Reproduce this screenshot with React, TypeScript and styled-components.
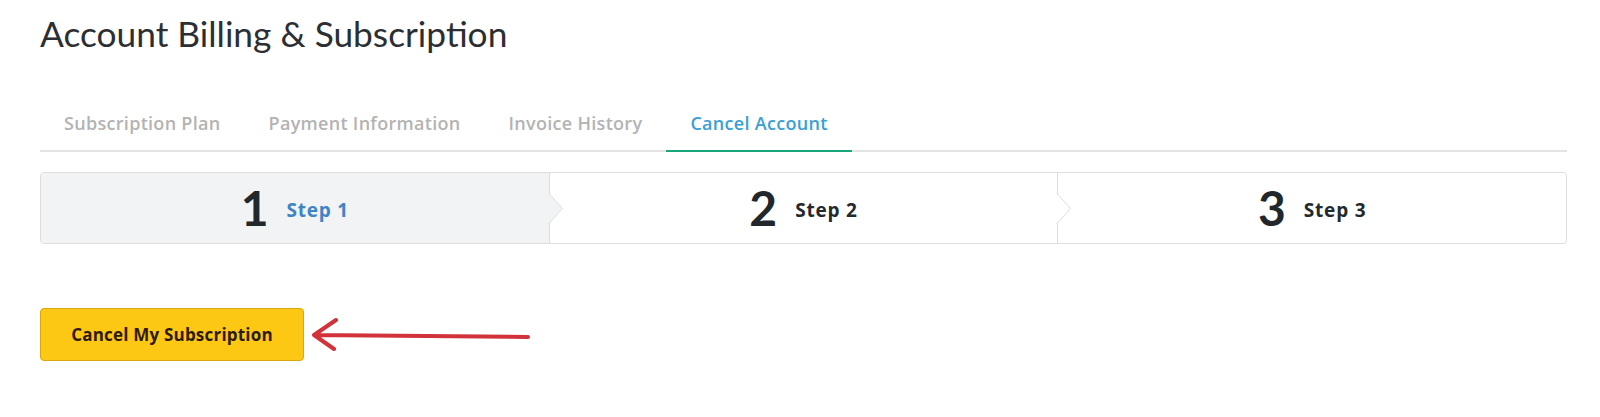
import React from 'react';
import styled, { createGlobalStyle } from 'styled-components';

const GlobalStyle = createGlobalStyle`
  body {
    margin: 0;
    background: #ffffff;
    font-family: "Open Sans", "Liberation Sans", sans-serif;
    color: #2b2f33;
  }
`;

const tabs = ['Subscription Plan', 'Payment Information', 'Invoice History', 'Cancel Account'];

const steps = [
  { num: '1', label: 'Step 1', active: true },
  { num: '2', label: 'Step 2', active: false },
  { num: '3', label: 'Step 3', active: false },
];

export default function App() {
  return (
    <>
      <GlobalStyle />
      <Page>
        <Title>Account Billing &amp; Subscription</Title>

        <TabBar>
          {tabs.map((t, i) => (
            <Tab key={t} active={i === tabs.length - 1}>
              {t}
            </Tab>
          ))}
        </TabBar>

        <Steps>
          {steps.map((s, i) => (
            <Step key={s.num} active={s.active} first={i === 0} last={i === steps.length - 1}>
              <StepNum>{s.num}</StepNum>
              <StepLabel active={s.active}>{s.label}</StepLabel>
              {i < steps.length - 1 && (
                <Chevron width="16" height="32" viewBox="0 0 16 32">
                  <polygon points="0,0 14.5,15.5 0,31" fill={s.active ? '#f2f3f5' : '#ffffff'} />
                  <polyline points="0.5,0 14.5,15.5 0.5,31" fill="none" stroke="#dcdde0" strokeWidth="1" />
                </Chevron>
              )}
            </Step>
          ))}
        </Steps>

        <ActionRow>
          <CancelButton>Cancel My Subscription</CancelButton>
          <svg width="222" height="38" viewBox="0 0 222 38">
            <path
              d="M3 19 L217 21 M25 4 L3 19 L23 33"
              fill="none"
              stroke="#d2323a"
              strokeWidth="4"
              strokeLinecap="round"
              strokeLinejoin="round"
            />
          </svg>
        </ActionRow>
      </Page>
    </>
  );
}

const Page = styled.div`
  padding: 13px 33px 40px 40px;
`;

const Title = styled.h1`
  margin: 0;
  font-family: Lato, "Liberation Sans", sans-serif;
  font-size: 35.3px;
  line-height: 41px;
  font-weight: 400;
  color: #2b2f33;
`;

const TabBar = styled.div`
  display: flex;
  margin-top: 58px;
  border-bottom: 2px solid #e2e3e4;
`;

const Tab = styled.div<{ active?: boolean }>`
  padding: 0 24px 16px;
  margin-bottom: -2px;
  font-size: 18px;
  font-weight: 600;
  letter-spacing: 0.3px;
  line-height: 22px;
  color: ${(p) => (p.active ? '#3a9fd5' : '#b3b3b3')};
  border-bottom: 2px solid ${(p) => (p.active ? '#1aa67a' : 'transparent')};
`;

const Steps = styled.div`
  display: flex;
  margin-top: 20px;
  height: 70px;
  border: 1px solid #dcdde0;
  border-radius: 4px;
`;

const Step = styled.div<{ active?: boolean; first?: boolean; last?: boolean }>`
  position: relative;
  flex: 1;
  display: flex;
  align-items: center;
  justify-content: center;
  gap: 18px;
  background: ${(p) => (p.active ? '#f2f3f5' : '#ffffff')};
  border-right: ${(p) => (p.last ? 'none' : '1px solid #dcdde0')};
  border-radius: ${(p) => (p.first ? '4px 0 0 4px' : p.last ? '0 4px 4px 0' : '0')};
`;

const Chevron = styled.svg`
  position: absolute;
  left: calc(100% - 1px);
  top: 50%;
  margin-top: -15px;
  z-index: 1;
`;

const StepNum = styled.span`
  font-family: Lato, "Liberation Sans", sans-serif;
  font-size: 48px;
  font-weight: 700;
  line-height: 1;
  color: #22272b;
`;

const StepLabel = styled.span<{ active?: boolean }>`
  font-size: 19px;
  font-weight: 700;
  letter-spacing: 0.8px;
  color: ${(p) => (p.active ? '#3d84c6' : '#24292d')};
  margin-top: 4px;
`;

const ActionRow = styled.div`
  display: flex;
  align-items: center;
  gap: 7px;
  margin-top: 64px;
`;

const CancelButton = styled.button`
  width: 264px;
  height: 53px;
  background: #fcc814;
  border: 1px solid #d9a80e;
  border-radius: 4px;
  font-family: "Open Sans", "Liberation Sans", sans-serif;
  font-size: 17px;
  font-weight: 700;
  letter-spacing: 0.2px;
  color: #2e1a0c;
  cursor: pointer;
`;
